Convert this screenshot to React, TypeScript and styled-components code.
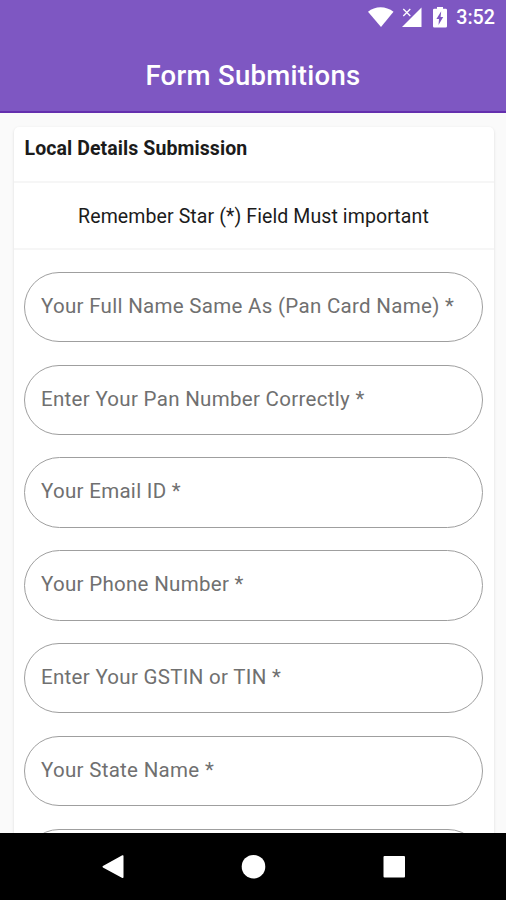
import React from 'react';
import styled, { createGlobalStyle } from 'styled-components';

const GlobalStyle = createGlobalStyle`
  * { box-sizing: border-box; }
  body { margin: 0; background: #fafafa; font-family: Roboto, sans-serif; }
`;

const Screen = styled.div`
  width: 506px;
  height: 900px;
  display: flex;
  flex-direction: column;
  overflow: hidden;
  background: #fafafa;
`;

const Header = styled.header`
  flex: none;
  height: 113px;
  background: #7e57c2;
  border-bottom: 2px solid #642fae;
`;

const StatusBar = styled.div`
  height: 36px;
  display: flex;
  align-items: center;
  justify-content: flex-end;
  padding-right: 11px;
  color: #fff;
`;

const StatusIcons = styled.svg`
  display: block;
  width: 82px;
  height: 36px;
  margin-right: 7px;
`;

const Clock = styled.time`
  font-size: 19.7px;
  font-weight: 500;
  line-height: 36px;
`;

const Title = styled.h1`
  margin: 0;
  height: 77px;
  line-height: 79px;
  text-align: center;
  color: #fff;
  font-size: 27.5px;
  font-weight: 500;
  letter-spacing: 0.3px;
`;

const Content = styled.main`
  flex: 1;
  min-height: 0;
  overflow: hidden;
  padding: 14px 12px 0 14px;
`;

const Card = styled.section`
  height: 900px;
  background: #fff;
  border-radius: 5px;
  box-shadow: 0 1px 3px rgba(0, 0, 0, 0.13);
`;

const CardTitle = styled.h2`
  margin: 0;
  height: 56px;
  padding: 0 10.5px;
  border-bottom: 2px solid #f6f6f6;
  color: #1b1b1b;
  font-size: 19.5px;
  font-weight: 700;
  line-height: 44px;
  letter-spacing: 0.09px;
`;

const Notice = styled.p`
  margin: 0;
  height: 67px;
  border-bottom: 2px solid #f6f6f6;
  color: #1b1b1b;
  font-size: 19.5px;
  line-height: 67px;
  letter-spacing: 0.1px;
  text-align: center;
  text-indent: -1px;
`;

const FieldList = styled.div`
  display: flex;
  flex-direction: column;
  gap: 22.3px;
  padding: 21.8px 11px 0 10px;
`;

const Field = styled.div`
  flex: none;
  height: 70.5px;
  padding: 0 16px;
  border: 1.3px solid #9f9f9f;
  border-radius: 36px;
  color: #707070;
  font-size: 20.5px;
  line-height: 66px;
  letter-spacing: 0.3px;
  white-space: nowrap;
`;

const NavBar = styled.nav`
  flex: none;
  height: 67px;
  background: #000;
`;

const fields = [
  'Your Full Name Same As (Pan Card Name) *',
  'Enter Your Pan Number Correctly *',
  'Your Email ID *',
  'Your Phone Number *',
  'Enter Your GSTIN or TIN *',
  'Your State Name *',
  '',
];

export default function App() {
  return (
    <>
      <GlobalStyle />
      <Screen>
        <Header>
          <StatusBar>
            <StatusIcons viewBox="367 0 82 36" fill="#fff" aria-hidden="true">
              <path d="M368 11.7C375 5.7 386 5.7 393.5 11.7L381 27Z" />
              <path d="M421.5 7.5V27H402Z" />
              <path d="M403.3 9L410.3 16M410.3 9L403.3 16" stroke="#fff" strokeWidth="1.3" />
              <path
                fillRule="evenodd"
                d="M434.3 8.8H437V7H443V8.8H445.7Q447 8.8 447 10V26.3Q447 27.6 445.7 27.6H434.3Q433 27.6 433 26.3V10Q433 8.8 434.3 8.8ZM441.2 11.3L436.4 18.9H439L438.5 24.9L443.2 17H440.6Z"
              />
            </StatusIcons>
            <Clock>3:52</Clock>
          </StatusBar>
          <Title>Form Submitions</Title>
        </Header>
        <Content>
          <Card>
            <CardTitle>Local Details Submission</CardTitle>
            <Notice>Remember Star (*) Field Must important</Notice>
            <FieldList>
              {fields.map((label, i) => (
                <Field key={i}>{label}</Field>
              ))}
            </FieldList>
          </Card>
        </Content>
        <NavBar>
          <svg width="506" height="67" viewBox="0 833 506 67" fill="#fff" aria-hidden="true">
            <path
              d="M122.7 856V877.2L103.3 866.7Z"
              stroke="#fff"
              strokeWidth="1.6"
              strokeLinejoin="round"
            />
            <circle cx="253.5" cy="866.7" r="11.8" />
            <rect x="383.5" y="856" width="21.5" height="21.5" rx="1" />
          </svg>
        </NavBar>
      </Screen>
    </>
  );
}
